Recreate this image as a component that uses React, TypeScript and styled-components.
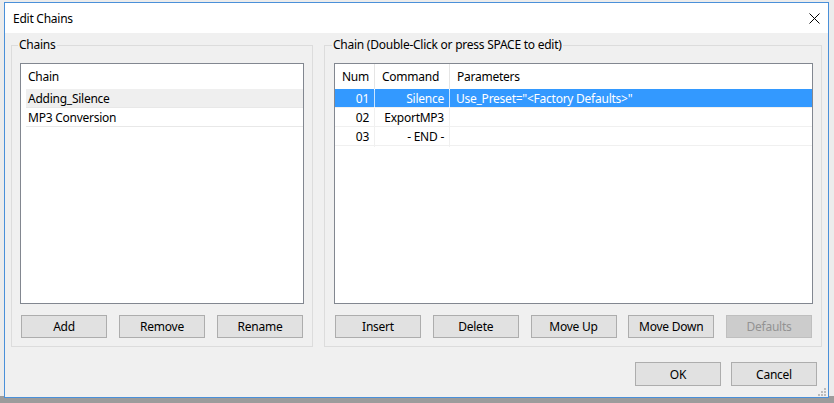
import styled, { createGlobalStyle } from 'styled-components';

// ─── Global ───────────────────────────────────────────────────────────────────

const GlobalStyle = createGlobalStyle`
  html, body {
    margin: 0;
    padding: 0;
  }
  body {
    font-family: 'Noto Sans', 'Segoe UI', sans-serif;
    font-size: 12px;
    letter-spacing: -0.25px;
    color: #000;
  }
  * {
    box-sizing: border-box;
  }
`;

// ─── Window chrome ────────────────────────────────────────────────────────────

const Desktop = styled.div`
  width: 834px;
  height: 403px;
  padding: 2px 5px 5px 4px;
  background: linear-gradient(to bottom, #ececec 0 396px, #9c9c9c 396px);
  overflow: hidden;
`;

const Window = styled.div`
  position: relative;
  width: 825px;
  height: 396px;
  border: 1px solid #4a90d9;
  background: #f0f0f0;
  display: flex;
  flex-direction: column;
`;

const TitleBar = styled.div`
  height: 30px;
  background: #fff;
  display: flex;
  align-items: center;
  justify-content: space-between;
  padding-left: 8px;
`;

const Title = styled.span`
  font-size: 12px;
`;

const CloseButton = styled.div`
  width: 28px;
  height: 30px;
  display: flex;
  align-items: center;
  justify-content: center;
`;

const SizeGrip = styled.svg`
  position: absolute;
  right: 2px;
  bottom: 1px;
`;

// ─── Body ─────────────────────────────────────────────────────────────────────

const Body = styled.div`
  flex: 1;
  display: flex;
  flex-direction: column;
  padding: 4px 6px 10px 6px;
`;

const Groups = styled.div`
  display: flex;
  gap: 11px;
`;

const GroupBox = styled.fieldset<{ $width?: number; $inset?: number }>`
  margin: 0;
  min-width: 0;
  border: 1px solid #dcdcdc;
  padding: 10px 8px 8px ${({ $inset }) => $inset ?? 8}px;
  display: flex;
  flex-direction: column;
  ${({ $width }) => ($width ? `width: ${$width}px;` : 'flex: 1;')}
`;

const Legend = styled.legend<{ $shift?: number }>`
  font-size: 12px;
  line-height: 16px;
  padding: 0 1px;
  margin-left: ${({ $shift }) => $shift ?? -2}px;
`;

const ListBox = styled.div`
  height: 241px;
  border: 1px solid #828790;
  background: #fff;
  overflow: hidden;
`;

// ── Chains list ──

const ChainHeader = styled.div`
  height: 25px;
  line-height: 26px;
  padding-left: 7px;
`;

const ChainRow = styled.div<{ $active?: boolean }>`
  margin-left: 5px;
  height: 19px;
  line-height: 20px;
  padding-left: 2px;
  border-bottom: 1px solid #e8e8e8;
  background: ${({ $active }) => ($active ? '#efefef' : '#fff')};
`;

// ── Commands grid ──

const GridRow = styled.div<{ $header?: boolean; $selected?: boolean }>`
  display: grid;
  grid-template-columns: 40px 75px 1fr;
  height: ${({ $header }) => ($header ? '25px' : '19px')};
  background: ${({ $selected }) => ($selected ? '#3399ff' : '#fff')};
  color: ${({ $selected }) => ($selected ? '#fff' : '#000')};
  border-bottom: ${({ $header }) => ($header ? 'none' : '1px solid #f0f0f0')};
`;

const Cell = styled.div<{ $align?: 'left' | 'right'; $header?: boolean; $selected?: boolean }>`
  line-height: ${({ $header }) => ($header ? '26px' : '20px')};
  text-align: ${({ $align }) => $align || 'left'};
  padding: ${({ $align, $header }) =>
    $header ? '0 0 0 7px' : $align === 'right' ? '0 5px 0 0' : '0 0 0 6px'};
  border-right: 1px solid
    ${({ $header, $selected }) =>
      $header ? '#e5e5e5' : $selected ? 'rgba(255,255,255,0.75)' : '#f0f0f0'};
  white-space: nowrap;

  &:last-child {
    border-right: none;
  }
`;

// ── Buttons ──

const ButtonRow = styled.div`
  display: flex;
  justify-content: space-between;
  margin-top: 11px;
  padding: 0 1px;
`;

const Button = styled.button<{ $tall?: boolean }>`
  width: 86px;
  height: ${({ $tall }) => ($tall ? '24px' : '23px')};
  padding: 0;
  border: 1px solid #adadad;
  background: #e1e1e1;
  color: #000;
  font-family: 'Noto Sans', 'Segoe UI', sans-serif;
  font-size: 12px;
  letter-spacing: -0.25px;

  &:disabled {
    background: #cccccc;
    border-color: #bfbfbf;
    color: #939393;
  }
`;

const Footer = styled.div`
  display: flex;
  justify-content: flex-end;
  gap: 10px;
  margin-top: 15px;
  padding-right: 5px;
`;

// ─── Data ─────────────────────────────────────────────────────────────────────

const chains = ['Adding_Silence', 'MP3 Conversion'];

const commands = [
  { num: '01', command: 'Silence', params: 'Use_Preset="<Factory Defaults>"' },
  { num: '02', command: 'ExportMP3', params: '' },
  { num: '03', command: '- END -', params: '' },
];

// ─── Component ────────────────────────────────────────────────────────────────

export default function App() {
  return (
    <Desktop>
      <GlobalStyle />
      <Window>
        <TitleBar>
          <Title>Edit Chains</Title>
          <CloseButton>
            <svg width="11" height="11" viewBox="0 0 11 11">
              <path d="M0.5 0.5 L10.5 10.5 M10.5 0.5 L0.5 10.5" stroke="#000" strokeWidth="1" fill="none" />
            </svg>
          </CloseButton>
        </TitleBar>

        <Body>
          <Groups>
            {/* Left — chains */}
            <GroupBox $width={302}>
              <Legend>Chains</Legend>
              <ListBox>
                <ChainHeader>Chain</ChainHeader>
                {chains.map((c, i) => (
                  <ChainRow key={c} $active={i === 0}>
                    {c}
                  </ChainRow>
                ))}
              </ListBox>
              <ButtonRow>
                <Button>Add</Button>
                <Button>Remove</Button>
                <Button>Rename</Button>
              </ButtonRow>
            </GroupBox>

            {/* Right — chain commands */}
            <GroupBox $inset={9}>
              <Legend $shift={-2}>Chain (Double-Click or press SPACE to edit)</Legend>
              <ListBox>
                <GridRow $header>
                  <Cell $header>Num</Cell>
                  <Cell $header>Command</Cell>
                  <Cell $header>Parameters</Cell>
                </GridRow>
                {commands.map((c, i) => (
                  <GridRow key={c.num} $selected={i === 0}>
                    <Cell $align="right" $selected={i === 0}>{c.num}</Cell>
                    <Cell $align="right" $selected={i === 0}>{c.command}</Cell>
                    <Cell $selected={i === 0}>{c.params}</Cell>
                  </GridRow>
                ))}
              </ListBox>
              <ButtonRow>
                <Button>Insert</Button>
                <Button>Delete</Button>
                <Button>Move Up</Button>
                <Button>Move Down</Button>
                <Button disabled>Defaults</Button>
              </ButtonRow>
            </GroupBox>
          </Groups>

          <Footer>
            <Button $tall>OK</Button>
            <Button $tall>Cancel</Button>
          </Footer>
        </Body>

        <SizeGrip width="9" height="9" viewBox="0 0 9 9">
          {[
            [7, 1],
            [4, 4], [7, 4],
            [1, 7], [4, 7], [7, 7],
          ].map(([x, y]) => (
            <rect key={`${x}-${y}`} x={x} y={y} width="2" height="2" fill="#bcbcbc" />
          ))}
        </SizeGrip>
      </Window>
    </Desktop>
  );
}
